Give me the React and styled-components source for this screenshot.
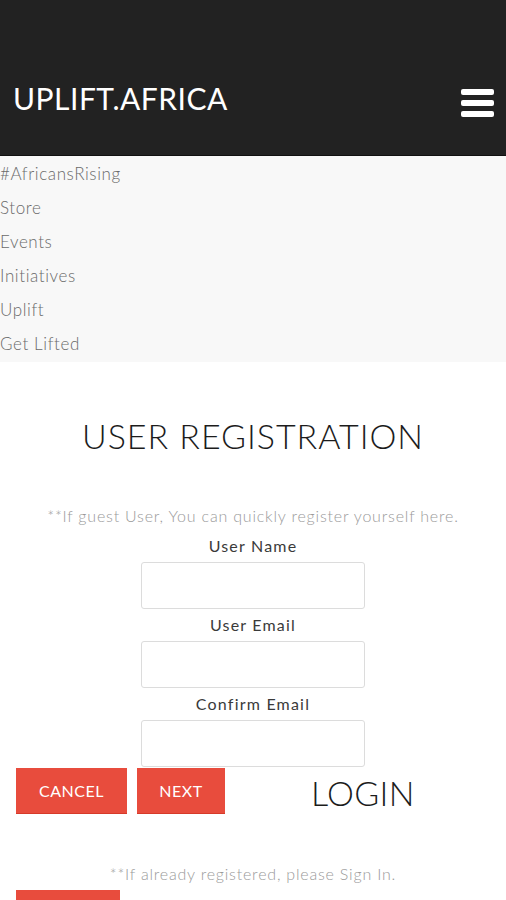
import React from "react";
import styled, { createGlobalStyle } from "styled-components";

const GlobalStyle = createGlobalStyle`
  body {
    margin: 0;
    background: #fff;
    font-family: "Lato", "Open Sans", sans-serif;
  }
`;

const Header = styled.header`
  height: 156px;
  box-sizing: border-box;
  padding: 40px 12px 0 13px;
  background: #222222;
  border-bottom: 1px solid #111;
  display: flex;
  align-items: center;
  justify-content: space-between;
`;

const Brand = styled.div`
  color: #fff;
  font-size: 30px;
  font-weight: 400;
  letter-spacing: 0.5px;
`;

const Burger = styled.div`
  width: 33px;
  display: flex;
  flex-direction: column;
  gap: 5px;
  margin-top: 10px;
`;

const BurgerBar = styled.span`
  display: block;
  height: 6px;
  border-radius: 2px;
  background: #fff;
`;

const Nav = styled.nav`
  background: #f8f8f8;
  padding: 1px 0 1px;
`;

const NavItem = styled.div`
  height: 34px;
  line-height: 34px;
  font-size: 17px;
  font-weight: 300;
  color: #6a6a6a;
  letter-spacing: 0.6px;
`;

const Section = styled.section`
  text-align: center;
`;

const Title = styled.h1`
  margin: 53px 0 0;
  font-size: 34px;
  font-weight: 300;
  color: #1c1c1c;
  line-height: 42px;
  letter-spacing: 0.95px;
`;

const Hint = styled.p`
  margin: ${(p) => p.$top} 0 0;
  font-size: 16px;
  font-weight: 300;
  color: #9a9a9a;
  line-height: 22px;
  letter-spacing: 0.8px;
`;

const Fields = styled.div`
  padding-top: 3px;
`;

const Field = styled.div`
  display: flex;
  flex-direction: column;
  align-items: center;
`;

const Label = styled.label`
  font-size: 16px;
  color: #3a3a3a;
  line-height: 22px;
  margin-top: 5px;
  margin-bottom: 5px;
  letter-spacing: 1.2px;
`;

const Input = styled.div`
  width: 224px;
  height: 47px;
  box-sizing: border-box;
  border: 1px solid #dcdcdc;
  border-radius: 3px;
  background: #fff;
`;

const ActionRow = styled.div`
  display: flex;
  align-items: center;
  padding-left: 16px;
  margin-top: 1px;
`;

const Button = styled.button`
  width: ${(p) => p.$w}px;
  height: 46px;
  margin-right: 10px;
  border: none;
  border-bottom: 1px solid #d63a2a;
  background: #e84c3d;
  color: #fff;
  font-family: inherit;
  font-size: 16px;
  letter-spacing: 0.5px;
  text-transform: uppercase;
  padding: 0;
`;

const LoginTitle = styled.h2`
  margin: 2px 0 0 76px;
  font-size: 34px;
  font-weight: 300;
  color: #1c1c1c;
  letter-spacing: 0.3px;
`;

const BottomRow = styled.div`
  padding: 5px 16px 0;
`;

export default function App() {
  const nav = ["#AfricansRising", "Store", "Events", "Initiatives", "Uplift", "Get Lifted"];
  return (
    <>
      <GlobalStyle />
      <Header>
        <Brand>UPLIFT.AFRICA</Brand>
        <Burger>
          <BurgerBar />
          <BurgerBar />
          <BurgerBar />
        </Burger>
      </Header>
      <Nav>
        {nav.map((n) => (
          <NavItem key={n}>{n}</NavItem>
        ))}
      </Nav>
      <Section>
        <Title>USER REGISTRATION</Title>
        <Hint $top="48px">**If guest User, You can quickly register yourself here.</Hint>
        <Fields>
          <Field>
            <Label>User Name</Label>
            <Input />
          </Field>
          <Field>
            <Label>User Email</Label>
            <Input />
          </Field>
          <Field>
            <Label>Confirm Email</Label>
            <Input />
          </Field>
        </Fields>
      </Section>
      <ActionRow>
        <Button $w={111}>Cancel</Button>
        <Button $w={88}>Next</Button>
        <LoginTitle>LOGIN</LoginTitle>
      </ActionRow>
      <Section>
        <Hint $top="49px">**If already registered, please Sign In.</Hint>
      </Section>
      <BottomRow>
        <Button $w={104}>Login</Button>
      </BottomRow>
    </>
  );
}
